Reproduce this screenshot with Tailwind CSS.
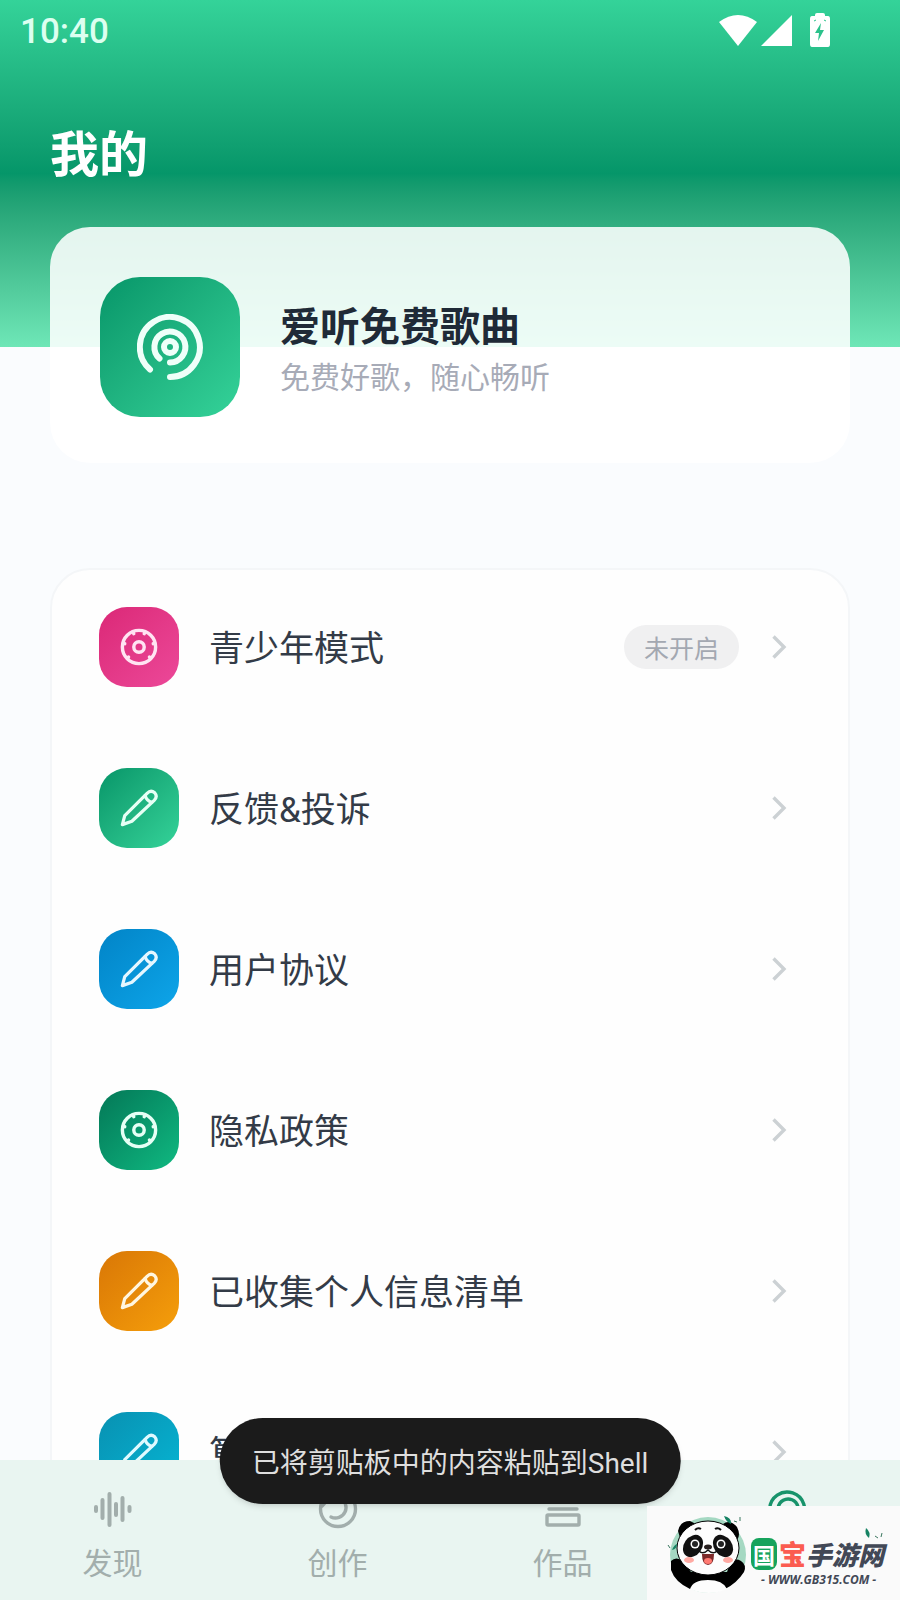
<!DOCTYPE html>
<html lang="zh-CN">
<head>
  <meta charset="UTF-8">
  <meta name="viewport" content="width=device-width, initial-scale=1.0">
  <title>我的</title>
  <script src="https://cdn.jsdelivr.net/npm/@tailwindcss/browser@4"></script>
</head>
<body class="relative flex h-screen flex-col overflow-hidden bg-[#fafcfe] font-['Noto_Sans_CJK_SC',sans-serif] text-[#333b47]">
  <!-- Shared icon shapes -->
  <svg class="hidden" aria-hidden="true">
    <symbol id="pencil" viewBox="0 0 40 40">
      <g fill="none" stroke="currentColor" stroke-width="3.4" stroke-linejoin="round" stroke-linecap="round">
        <path d="M2.500 37.500 5 28 28.500 4.500Q32.500 .500 36.500 4Q40 8 36 12L12.500 34Z"/>
        <path d="M26.500 7Q28 12.500 33.500 14"/>
      </g>
    </symbol>
    <symbol id="dial" viewBox="0 0 40 40">
      <g fill="none" stroke="currentColor" stroke-width="3.6" stroke-linecap="round">
        <circle cx="20" cy="20" r="17.500"/>
        <circle cx="20" cy="20" r="5.500"/>
        <path d="M14 4.500 14.500 6M26 4.500 25.500 6M3.500 16 5 16.500M36.500 16 35 16.500M8 31.500 9 30.500M32 31.500 31 30.500"/>
      </g>
    </symbol>
    <symbol id="chevron" viewBox="0 0 16 26">
      <path d="M2.500 2.500 13 13 2.500 23.500" fill="none" stroke="currentColor" stroke-width="3.4"/>
    </symbol>
  </svg>

  <main class="min-h-0 flex-1 overflow-hidden">
    <header class="h-[347px] bg-linear-to-b from-[#34d399] via-[#059669] to-[#6ee7b7]">
      <div class="flex h-[60px] items-center justify-between pr-[69px] pl-5 text-white">
        <span class="pt-1 font-['Roboto',sans-serif] text-[35px] leading-[56px] font-medium text-[#dcfff0]">10:40</span>
        <div class="flex items-center gap-1">
          <svg class="h-[33px] w-[38px]" viewBox="0 0 38 33" fill="currentColor"><path d="M0 8Q19-6 38 8L19 32Z"/></svg>
          <svg class="h-[33px] w-8" viewBox="0 0 32 33" fill="currentColor"><path d="M31 1V32H0Z"/></svg>
          <svg class="ml-3 h-[35px] w-[22px]" viewBox="0 0 22 35"><path d="M6 3V2Q6 0 8 0H14Q16 0 16 2V3H19Q21 3 21 6V31Q21 34 19 34H3Q1 34 1 31V6Q1 3 3 3Z" fill="currentColor"/><path d="M5 8 7 7M15 7 17 8" stroke="#2bc28b"/><path d="M12 10 6 20H10L9 28 15 17H11Z" fill="#2bc28b"/></svg>
        </div>
      </div>
      <h1 class="mt-14 px-[50px] text-[49px] leading-[70px] font-bold text-white">我的</h1>
    </header>

    <!-- Profile card -->
    <section class="relative mx-[50px] -mt-[120px] flex items-center gap-10 rounded-[40px] bg-white/87 px-[50px] pt-[50px] pb-[46px]">
      <div class="flex size-[140px] items-center justify-center rounded-[40px] bg-linear-to-br from-[#059669] to-[#34d399] text-[#effff9]">
        <svg class="size-[66px]" viewBox="0 0 66 66" fill="none" stroke="currentColor" stroke-width="6" stroke-linecap="round">
          <path d="M13 55.500A30 30 0 1 1 33 63"/>
          <path d="M22.500 44.500A15.500 15.500 0 1 1 33 48.500"/>
          <circle cx="33" cy="33" r="6"/>
        </svg>
      </div>
      <div>
        <h2 class="text-[40px] leading-[56px] font-bold text-[#1f2a37]">爱听免费歌曲</h2>
        <p class="text-[30px] leading-[46px] text-[#a7abb7]">免费好歌，随心畅听</p>
      </div>
    </section>

    <!-- Settings list -->
    <section class="mx-[50px] mt-[105px] rounded-[40px] border-2 border-[#f4f6f8] bg-[#fefefe]">
      <ul class="-mt-1 text-[35px]">
        <li>
          <a href="#" class="flex h-[161px] items-center pr-[61px] pl-[47px]">
            <span class="flex size-20 items-center justify-center rounded-[28px] bg-linear-to-br from-[#db2777] to-[#ec4899] text-[#ffe4f2]"><svg class="size-[38px]"><use href="#dial"/></svg></span>
            <span class="ml-[30px] flex-1">青少年模式</span>
            <span class="mr-8 rounded-full bg-[#f0f0f1] px-5 text-[25px] leading-[44px] text-[#a3a8b1]">未开启</span>
            <svg class="h-[26px] w-4 text-[#ccd1d4]"><use href="#chevron"/></svg>
          </a>
        </li>
        <li>
          <a href="#" class="flex h-[161px] items-center pr-[61px] pl-[47px]">
            <span class="flex size-20 items-center justify-center rounded-[28px] bg-linear-to-br from-[#059669] to-[#34d399] text-[#e6fff5]"><svg class="size-[38px]"><use href="#pencil"/></svg></span>
            <span class="ml-[30px] flex-1">反馈<span class="font-['Roboto',sans-serif] leading-none">&amp;</span>投诉</span>
            <svg class="h-[26px] w-4 text-[#ccd1d4]"><use href="#chevron"/></svg>
          </a>
        </li>
        <li>
          <a href="#" class="flex h-[161px] items-center pr-[61px] pl-[47px]">
            <span class="flex size-20 items-center justify-center rounded-[28px] bg-linear-to-br from-[#0284c7] to-[#0ea5e9] text-[#e6f7ff]"><svg class="size-[38px]"><use href="#pencil"/></svg></span>
            <span class="ml-[30px] flex-1">用户协议</span>
            <svg class="h-[26px] w-4 text-[#ccd1d4]"><use href="#chevron"/></svg>
          </a>
        </li>
        <li>
          <a href="#" class="flex h-[161px] items-center pr-[61px] pl-[47px]">
            <span class="flex size-20 items-center justify-center rounded-[28px] bg-linear-to-br from-[#047857] to-[#10b981] text-[#e6fff5]"><svg class="size-[38px]"><use href="#dial"/></svg></span>
            <span class="ml-[30px] flex-1">隐私政策</span>
            <svg class="h-[26px] w-4 text-[#ccd1d4]"><use href="#chevron"/></svg>
          </a>
        </li>
        <li>
          <a href="#" class="flex h-[161px] items-center pr-[61px] pl-[47px]">
            <span class="flex size-20 items-center justify-center rounded-[28px] bg-linear-to-br from-[#d97706] to-[#f59e0b] text-[#fff6e0]"><svg class="size-[38px]"><use href="#pencil"/></svg></span>
            <span class="ml-[30px] flex-1">已收集个人信息清单</span>
            <svg class="h-[26px] w-4 text-[#ccd1d4]"><use href="#chevron"/></svg>
          </a>
        </li>
        <li>
          <a href="#" class="flex h-[161px] items-center pr-[61px] pl-[47px]">
            <span class="flex size-20 items-center justify-center rounded-[28px] bg-linear-to-br from-[#0891b2] to-[#06b6d4] text-[#e0faff]"><svg class="size-[38px]"><use href="#pencil"/></svg></span>
            <span class="ml-[30px] flex-1">算</span>
            <svg class="h-[26px] w-4 text-[#ccd1d4]"><use href="#chevron"/></svg>
          </a>
        </li>
      </ul>
    </section>
  </main>

  <!-- Tab bar -->
  <nav class="grid h-[140px] shrink-0 grid-cols-4 bg-[#e9f5f1] text-[30px] leading-[44px] text-[#a2aeac]">
    <a href="#" class="flex flex-col items-center gap-[10px] pt-[29px]">
      <svg class="size-10" viewBox="0 0 40 40" fill="none" stroke="currentColor" stroke-width="4" stroke-linecap="round"><path d="M3 18V22M9.500 11V29M16.500 5V36M23 15V26M29.500 9V31M36.500 18V22"/></svg>
      <span>发现</span>
    </a>
    <a href="#" class="flex flex-col items-center gap-[10px] pt-[29px]">
      <svg class="size-10" viewBox="0 0 40 40" fill="none" stroke="currentColor" stroke-width="3.400" stroke-linecap="round"><circle cx="20" cy="20" r="17.500"/><path d="M4 17Q12 8 22 9A10.500 10.500 0 1 1 13 28"/></svg>
      <span>创作</span>
    </a>
    <a href="#" class="flex flex-col items-center gap-[10px] pt-[29px]">
      <svg class="size-10" viewBox="0 0 40 40" fill="none" stroke="currentColor" stroke-width="3.400" stroke-linecap="round"><path d="M9 11H31M6 20H34"/><rect x="4" y="26" width="32" height="10" rx="1"/></svg>
      <span>作品</span>
    </a>
    <a href="#" class="flex flex-col items-center gap-[10px] pt-[29px] text-[#17936b]">
      <svg class="size-10" viewBox="0 0 40 40" fill="none" stroke="currentColor" stroke-width="3.400" stroke-linecap="round"><path d="M8 34A17.500 17.500 0 1 1 20 38"/><path d="M13 27A10 10 0 1 1 20 30"/><circle cx="20" cy="21" r="2"/></svg>
      <span>我的</span>
    </a>
  </nav>

  <!-- Toast -->
  <div role="status" class="absolute bottom-24 left-1/2 -translate-x-1/2 rounded-full bg-[#1b1b1b] px-8 text-[28px] leading-[86px] whitespace-nowrap text-[#dedede] shadow-md">已将剪贴板中的内容粘贴到<span class="font-['Roboto',sans-serif] leading-none">Shell</span></div>

  <!-- Site badge -->
  <div class="absolute right-0 bottom-0 flex h-[94px] w-[253px] items-center bg-[#fafafa] pl-5">
    <svg class="h-20 w-[84px] shrink-0" viewBox="0 0 84 80">
      <circle cx="41" cy="42" r="38" fill="#a5d8c2"/>
      <path d="M11 18Q13 8 23 8L29 11 14 28ZM56 11Q63 6 70 14Q74 22 70 27Z" fill="#000"/>
      <path d="M4 48Q9 43 16 48L24 59H60L63 51Q67 44 74 48Q80 52 77 59Q70 70 58 76H23Q8 69 4 57Z" fill="#000"/>
      <ellipse cx="41" cy="35" rx="31" ry="27" fill="#fdfdfd" stroke="#000"/>
      <path d="M23 76Q26 67 41 67T60 76Q42 84 23 76Z" fill="#fdfdfd"/>
      <ellipse cx="26" cy="33" rx="9" ry="12" transform="rotate(35 26 33)" fill="#111"/>
      <ellipse cx="56" cy="33" rx="9" ry="12" transform="rotate(-35 56 33)" fill="#111"/>
      <circle cx="28" cy="31" r="4.500" fill="#fff"/><circle cx="28" cy="31" r="3" fill="#222"/>
      <circle cx="54" cy="31" r="4.500" fill="#fff"/><circle cx="54" cy="31" r="3" fill="#222"/>
      <path d="M28 17Q31 14 34 16M48 16Q51 14 54 17" fill="none" stroke="#111" stroke-width="2"/>
      <ellipse cx="41" cy="34" rx="4" ry="2.500" fill="#28201f"/>
      <path d="M32 38Q36 42 41 37Q46 42 50 38" fill="none" stroke="#111" stroke-width="1.500"/>
      <path d="M35 41H47Q47 52 41 52T35 41Z" fill="#7c2929"/><ellipse cx="41" cy="48" rx="4" ry="3" fill="#ff7a72"/>
      <ellipse cx="22" cy="47" rx="5" ry="3" fill="#ffaaa3"/><ellipse cx="61" cy="47" rx="5" ry="3" fill="#ffaaa3"/>
      <path d="M57 3Q65 5 64 11Q59 9 57 3ZM5 37Q7 32 10 31Q10 36 5 37Z" fill="#168263"/>
      <path d="M67 8 70 9M73 8V4M1 32 3 35" stroke="#39765e"/>
    </svg>
    <div class="relative flex min-w-0 flex-1 flex-col pt-[22px]">
      <svg class="absolute top-3 right-4 h-3 w-5" viewBox="0 0 20 12"><path d="M2 0Q7 4 5 10Q0 6 2 0Z" fill="#168263"/><path d="M11 8 14 10M17 9 18 5" stroke="#39765e"/></svg>
      <div class="flex items-center font-black text-[#424856]">
        <span class="mr-[2px] rounded-[8px] bg-[#16a35c] px-[2px] text-[22px] leading-8 font-bold text-white">国</span>
        <span class="text-[27px] leading-8 text-[#fb5c50]">宝</span>
        <span class="text-[26px] leading-8 italic">手游网</span>
      </div>
      <span class="pl-[10px] font-['Open_Sans',sans-serif] text-[12px] leading-5 font-bold whitespace-nowrap text-[#424856] italic">- WWW.GB315.COM -</span>
    </div>
  </div>
</body>
</html>
